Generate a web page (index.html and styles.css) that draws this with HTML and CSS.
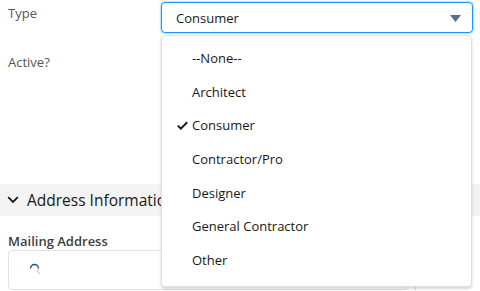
FILE: index.html
```html
<!DOCTYPE html>
<html>
<head>
<meta charset="utf-8">
<link rel="stylesheet" href="styles.css">
</head>
<body>
<div class="page">
  <div class="row row-type">
    <div class="label">Type</div>
    <div class="select">
      <span class="select-value">Consumer</span>
      <svg class="caret" width="11" height="7" viewBox="0 0 11 7"><path d="M0 0h11L5.5 7z" fill="#5a6b8c"/></svg>
    </div>
  </div>
  <div class="row row-active">
    <div class="label">Active?</div>
  </div>
  <div class="section-bar">
    <svg class="chev" width="12" height="8" viewBox="0 0 12 8"><path d="M1.2 1.2L6 6l4.8-4.8" fill="none" stroke="#181818" stroke-width="1.8"/></svg>
    <span class="section-title">Address Information</span>
  </div>
  <div class="field">
    <div class="field-label">Mailing Address</div>
    <div class="input">
      <svg class="search" width="12" height="12" viewBox="0 0 12 12"><path d="M1.5 5.5a4 4 0 0 1 8 0" fill="none" stroke="#1f4e8c" stroke-width="1.5"/><path d="M9.5 5.5a4 4 0 0 1-1.2 2.8L11 11" fill="none" stroke="#c9d3e0" stroke-width="1.2"/></svg>
    </div>
    <div class="input-edge"></div>
  </div>
  <ul class="dropdown">
    <li>--None--</li>
    <li>Architect</li>
    <li class="selected"><svg class="check" width="11" height="9" viewBox="0 0 11 9"><path d="M0.8 4.6L3.8 7.6 10.2 1.2" fill="none" stroke="#181818" stroke-width="2"/></svg>Consumer</li>
    <li>Contractor/Pro</li>
    <li>Designer</li>
    <li>General Contractor</li>
    <li>Other</li>
  </ul>
</div>
</body>
</html>
```
FILE: styles.css
```css
html, body {
  margin: 0;
  padding: 0;
  background: #fff;
}
body {
  font-family: "Open Sans", "Lato", sans-serif;
  color: #181818;
  width: 480px;
  height: 291px;
  overflow: hidden;
}
.page {
  position: relative;
  height: 291px;
}
.row {
  display: flex;
  align-items: flex-start;
}
.label {
  width: 153px;
  padding-left: 8px;
  font-size: 13px;
  color: #555;
  line-height: 18px;
}
.row-type {
  padding-top: 2px;
}
.row-type .label {
  padding-top: 2px;
}
.select {
  border: 1px solid #1b96ff;
  border-radius: 4px;
  box-shadow: 0 0 2px #1b96ff;
  display: flex;
  align-items: center;
  justify-content: space-between;
  padding: 0 11px 0 14px;
  box-sizing: border-box;
  width: 312px;
  height: 31px;
}
.select-value {
  font-size: 13px;
  color: #181818;
}
.caret {
  margin-top: 1px;
}
.row-active {
  margin-top: 20px;
}
.section-bar {
  margin-top: 113px;
  height: 32px;
  background: #f3f3f3;
  display: flex;
  align-items: center;
  padding-left: 7px;
}
.chev {
  margin-right: 8px;
}
.section-title {
  font-size: 15.5px;
  color: #181818;
}
.field {
  position: relative;
  padding: 16px 0 0 8px;
}
.field-label {
  font-size: 13px;
  font-weight: 600;
  color: #3e3e3c;
  line-height: 18px;
}
.input {
  width: 400px;
  height: 40px;
  border: 1px solid #e2e2e2;
  border-radius: 4px;
  box-sizing: border-box;
  display: flex;
  align-items: center;
  padding-left: 20px;
}
.search {
  margin-top: -2px;
}
.input-edge {
  position: absolute;
  left: 415px;
  top: 54px;
  width: 1px;
  height: 20px;
  background: #d8d8d8;
}
.dropdown {
  position: absolute;
  left: 161px;
  top: 35px;
  width: 311px;
  height: 252px;
  margin: 0;
  padding: 6px 0 0;
  list-style: none;
  background: #fff;
  border: 1px solid #e0e0e0;
  border-radius: 4px;
  box-shadow: 0 2px 3px rgba(0, 0, 0, 0.16);
  box-sizing: border-box;
}
.dropdown li {
  position: relative;
  height: 33.7px;
  line-height: 33.7px;
  padding-left: 30px;
  font-size: 13px;
  color: #181818;
}
.check {
  position: absolute;
  left: 15px;
  top: 12px;
}
```
